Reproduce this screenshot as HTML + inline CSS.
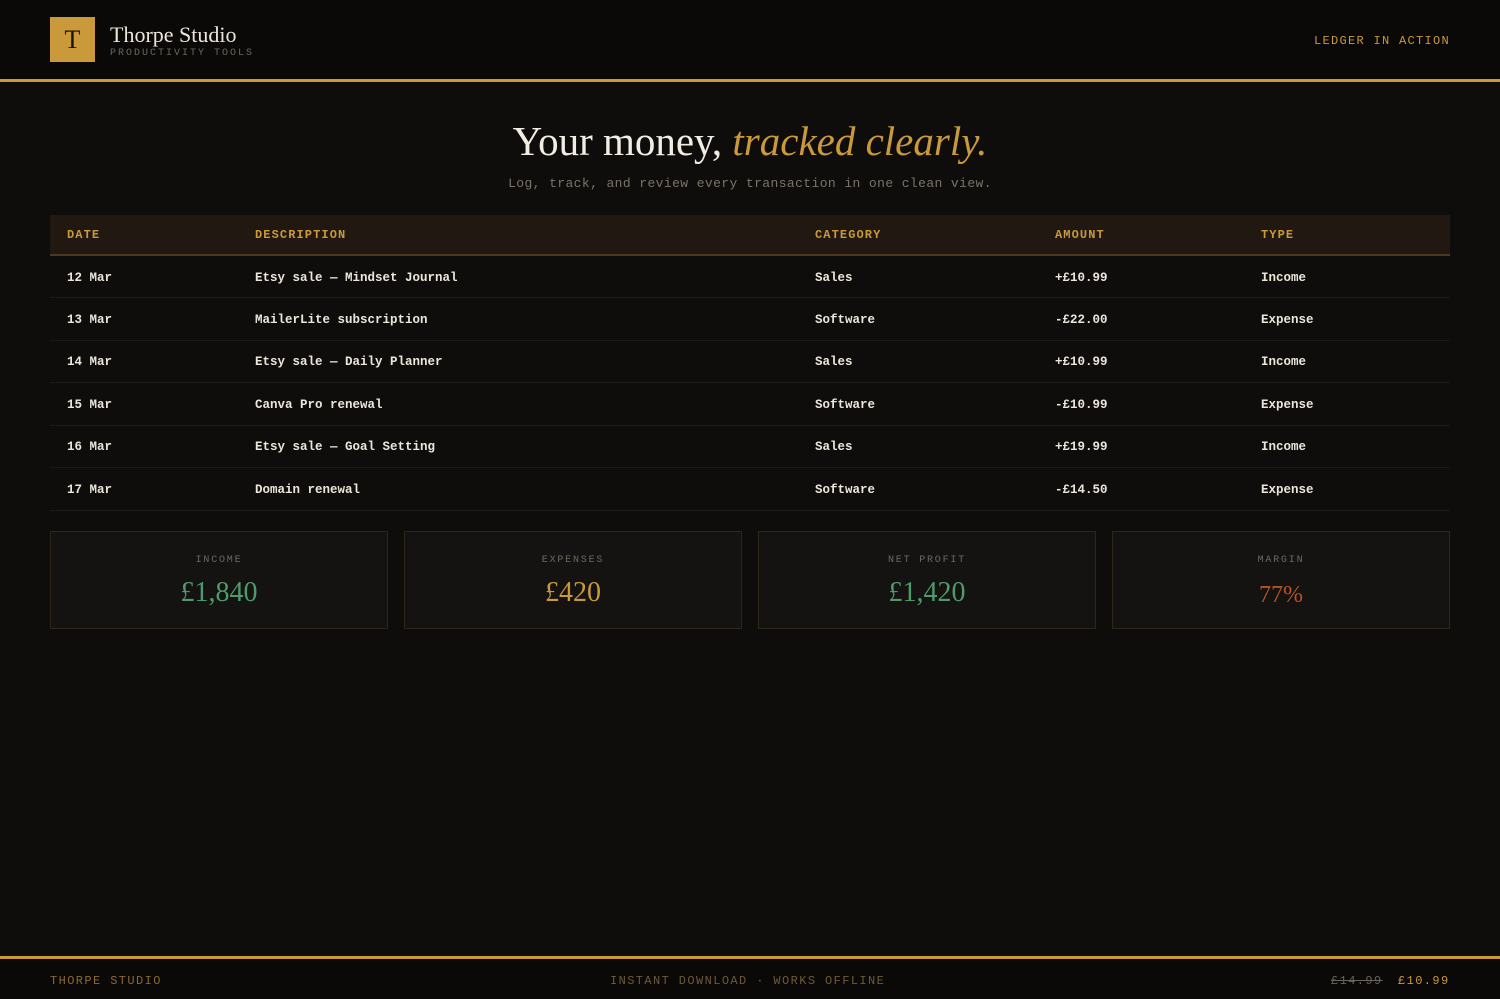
<!DOCTYPE html>
<html><head><meta charset="utf-8"><style>
*{margin:0;padding:0;box-sizing:border-box}
body{width:1500px;height:999px;background:#0e0d0c;font-family:"Liberation Mono",monospace;color:#e8e2d6;position:relative;overflow:hidden}
.hdr{position:absolute;left:0;top:0;width:1500px;height:82px;background:#0a0908;border-bottom:3px solid #c9993a}
.logo{position:absolute;left:50px;top:17px;width:45px;height:45px;background:#c9993a;color:#1a1408;font-family:"Liberation Serif",serif;font-size:26px;text-align:center;line-height:46px}
.brand{position:absolute;left:110px;top:22px;font-family:"Liberation Serif",serif;font-size:22px;color:#ece6da}
.sub{position:absolute;left:110px;top:48px;font-size:10px;letter-spacing:2px;color:#6e675d}
.nav{position:absolute;right:50px;top:34px;font-size:12px;letter-spacing:1.3px;color:#c9993a}
h1{position:absolute;left:0;width:1500px;top:117px;text-align:center;font-family:"Liberation Serif",serif;font-weight:normal;font-size:41px;color:#f2ede3}
h1 i{color:#c9993a}
.tag{position:absolute;left:0;width:1500px;top:176px;text-align:center;font-size:13px;color:#7a7368;letter-spacing:.4px}
table{position:absolute;left:50px;top:215px;width:1400px;border-collapse:collapse}
th{background:#211911;color:#c9993a;font-size:12px;letter-spacing:1.1px;text-align:left;height:40px;border-bottom:2px solid #4a3820;font-weight:bold}
td{height:42.5px;font-size:12.5px;border-bottom:1px solid #1c1a17;color:#ece6da;font-weight:bold;padding-top:2px}
th:first-child,td:first-child{padding-left:17px}
.card{position:absolute;top:531px;width:338px;height:98px;border:1px solid #2e2718;background:#141312;text-align:center}
.card .l{margin-top:23px;font-size:10px;letter-spacing:1.8px;color:#6f685e}
.card .v{margin-top:11px;font-family:"Liberation Serif",serif;font-size:28px}
.ftr{position:absolute;left:0;top:956px;width:1500px;height:43px;background:#0a0908;border-top:3px solid #c9993a;font-size:12px;letter-spacing:1.4px}
.ftr span{position:absolute;top:15px}
</style></head><body>
<div class="hdr"><div class="logo">T</div><div class="brand">Thorpe Studio</div><div class="sub">PRODUCTIVITY TOOLS</div><div class="nav">LEDGER IN ACTION</div></div>
<h1>Your money, <i>tracked clearly.</i></h1>
<div class="tag">Log, track, and review every transaction in one clean view.</div>
<table>
<tr><th style="width:205px">DATE</th><th style="width:560px">DESCRIPTION</th><th style="width:240px">CATEGORY</th><th style="width:206px">AMOUNT</th><th>TYPE</th></tr>
<tr><td>12 Mar</td><td>Etsy sale — Mindset Journal</td><td>Sales</td><td>+£10.99</td><td>Income</td></tr>
<tr><td>13 Mar</td><td>MailerLite subscription</td><td>Software</td><td>-£22.00</td><td>Expense</td></tr>
<tr><td>14 Mar</td><td>Etsy sale — Daily Planner</td><td>Sales</td><td>+£10.99</td><td>Income</td></tr>
<tr><td>15 Mar</td><td>Canva Pro renewal</td><td>Software</td><td>-£10.99</td><td>Expense</td></tr>
<tr><td>16 Mar</td><td>Etsy sale — Goal Setting</td><td>Sales</td><td>+£19.99</td><td>Income</td></tr>
<tr><td>17 Mar</td><td>Domain renewal</td><td>Software</td><td>-£14.50</td><td>Expense</td></tr>
</table>
<div class="card" style="left:50px"><div class="l">INCOME</div><div class="v" style="color:#4f9a6c">£1,840</div></div>
<div class="card" style="left:404px"><div class="l">EXPENSES</div><div class="v" style="color:#c9993a">£420</div></div>
<div class="card" style="left:758px"><div class="l">NET PROFIT</div><div class="v" style="color:#4f9a6c">£1,420</div></div>
<div class="card" style="left:1112px"><div class="l">MARGIN</div><div class="v" style="color:#b5542a;font-size:24px;margin-top:16px">77%</div></div>
<div class="ftr"><span style="left:50px;color:#8a6a30">THORPE STUDIO</span><span style="left:610px;color:#6e5a36">INSTANT DOWNLOAD · WORKS OFFLINE</span><span style="left:1331px;color:#6a645a;text-decoration:line-through">£14.99</span><span style="left:1398px;color:#c9993a">£10.99</span></div>
</body></html>
